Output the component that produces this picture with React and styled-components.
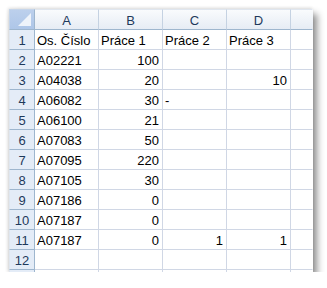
import React from "react";
import styled, { createGlobalStyle } from "styled-components";

const Global = createGlobalStyle`
  html, body { margin: 0; padding: 0; background: #ffffff; }
  body { font-family: "Liberation Sans", Arial, sans-serif; }
`;

const Page = styled.div`
  padding: 9px 0 0 9px;
`;

const Sheet = styled.div`
  display: grid;
  grid-template-columns: 26px 64px 64px 64px 64px 22px;
  grid-template-rows: 21px repeat(12, 20px) 2px;
  width: 304px;
  background: #ffffff;
  box-shadow: 4px 5px 7px rgba(0, 0, 0, 0.45), -1px -1px 3px rgba(0, 0, 0, 0.12);
  font-size: 13px;
  color: #000000;
`;

const Corner = styled.div`
  box-sizing: border-box;
  position: relative;
  background: linear-gradient(#bcd0ec, #aec6e8);
  border-right: 1px solid #9eb6ce;
  border-bottom: 1px solid #9eb6ce;
  border-top: 1px solid #c5d5ea;
  border-left: 1px solid #c5d5ea;
  &::after {
    content: "";
    position: absolute;
    right: 3px;
    bottom: 3px;
    width: 0;
    height: 0;
    border-left: 13px solid transparent;
    border-bottom: 13px solid #eef3fa;
  }
`;

const ColHead = styled.div`
  box-sizing: border-box;
  background: linear-gradient(#f9fbfd, #e6ecf4);
  border-right: 1px solid ${(p) => (p.$last ? "transparent" : "#c5d2e2")};
  border-bottom: 1px solid #9eb6ce;
  border-top: 1px solid #dfe6ef;
  display: flex;
  align-items: center;
  justify-content: center;
  color: #1e395b;
  padding-top: 1px;
`;

const RowHead = styled.div`
  box-sizing: border-box;
  background: #e4ecf7;
  border-right: 1px solid #9eb6ce;
  border-bottom: 1px solid ${(p) => (p.$sliver ? "transparent" : "#9eb6ce")};
  border-left: 1px solid #dfe6ef;
  display: flex;
  align-items: flex-end;
  justify-content: center;
  padding-bottom: 2px;
  color: #1e395b;
  line-height: 1;
  overflow: hidden;
`;

const Cell = styled.div`
  box-sizing: border-box;
  border-right: 1px solid ${(p) => (p.$last ? "transparent" : "#d0d7e5")};
  border-bottom: 1px solid ${(p) => (p.$sliver ? "transparent" : "#d0d7e5")};
  display: flex;
  align-items: flex-end;
  justify-content: ${(p) => (p.$num ? "flex-end" : "flex-start")};
  padding: 0 3px 2px 2px;
  line-height: 1;
  white-space: nowrap;
  overflow: visible;
  color: #000000;
`;

const cols = ["A", "B", "C", "D", ""];

const rows = [
  ["Os. Číslo", "Práce 1", "Práce 2", "Práce 3", ""],
  ["A02221", 100, "", "", ""],
  ["A04038", 20, "", 10, ""],
  ["A06082", 30, "-", "", ""],
  ["A06100", 21, "", "", ""],
  ["A07083", 50, "", "", ""],
  ["A07095", 220, "", "", ""],
  ["A07105", 30, "", "", ""],
  ["A07186", 0, "", "", ""],
  ["A07187", 0, "", "", ""],
  ["A07187", 0, 1, 1, ""],
  ["", "", "", "", ""],
];

export default function App() {
  return (
    <Page>
      <Global />
      <Sheet>
        <Corner />
        {cols.map((c, i) => (
          <ColHead key={"h" + i} $last={i === cols.length - 1}>
            {c}
          </ColHead>
        ))}
        {rows.map((r, ri) => (
          <React.Fragment key={ri}>
            <RowHead>{ri + 1}</RowHead>
            {r.map((v, ci) => (
              <Cell
                key={ci}
                $num={typeof v === "number"}
                $last={ci === r.length - 1}
              >
                {v}
              </Cell>
            ))}
          </React.Fragment>
        ))}
        <RowHead $sliver />
        {cols.map((c, i) => (
          <Cell key={"s" + i} $sliver $last={i === cols.length - 1} />
        ))}
      </Sheet>
    </Page>
  );
}
